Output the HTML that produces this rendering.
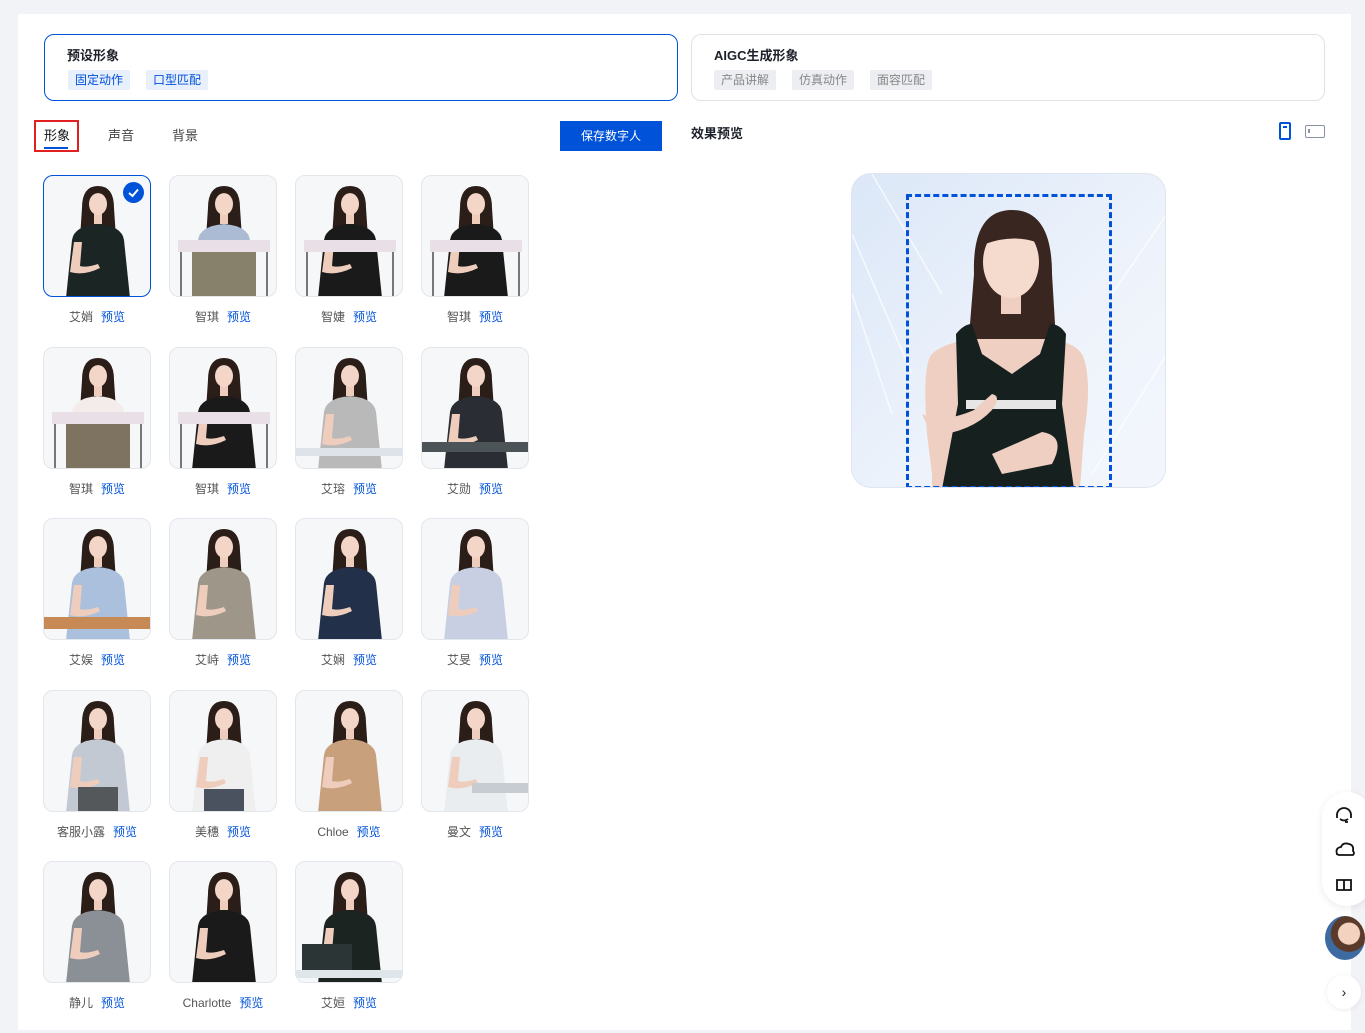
<!DOCTYPE html>
<html><head><meta charset="utf-8">
<style>
*{box-sizing:border-box;margin:0;padding:0}
body{width:1365px;height:1033px;background:#f2f3f7;font-family:"Liberation Sans","Noto Sans CJK SC",sans-serif;position:relative;overflow:hidden;color:#1d2129}
.panel{position:absolute;left:18px;top:14px;width:1333px;height:1016px;background:#fff}
.box{position:absolute;top:34px;height:67px;border-radius:10px;background:#fff}
.box h4{position:absolute;left:22px;top:10px;font-size:13px;font-weight:bold;color:#1d2129}
.tag{position:absolute;top:35px;height:20px;line-height:20px;font-size:12px;padding:0 7px;border-radius:2px}
.tb{background:#e8effd;color:#0052d9}
.tg{background:#eceef2;color:#888}
.tab{position:absolute;top:125px;font-size:13px;color:#444}
.card{position:absolute;width:108px;height:122px;border:1px solid #e3e6eb;border-radius:10px;background:#f5f7f9;overflow:hidden}
.card svg{position:absolute;left:0;top:0}
.sel{border:1.5px solid #0052d9}
.lbl{position:absolute;width:108px;text-align:center;font-size:12px;color:#555}
.lbl b{font-weight:normal;color:#0052d9;margin-left:8px}
</style></head><body>
<svg width="0" height="0" style="position:absolute">
<defs>
<symbol id="fig" viewBox="0 0 108 122">
<path d="M38 32 Q38 10 54 10 Q70 10 70 32 L72 62 L36 62Z" fill="#2b1d18"/>
<path d="M28 64 Q30 50 54 48 Q78 50 80 64 L86 122 L22 122Z" fill="currentColor"/>
<rect x="50" y="36" width="8" height="12" fill="#efcdbd"/>
<ellipse cx="54" cy="28" rx="9" ry="11" fill="#f3d6c7"/>
<path d="M44 22 Q54 12 64 22 L64 18 Q54 8 44 18Z" fill="#2b1d18"/>
<path d="M30 66 L26 96 Q40 100 56 92 L54 88 Q42 92 36 90 L38 66Z" fill="#efcdbd"/>
</symbol>
<symbol id="desk" viewBox="0 0 108 122">
<rect x="8" y="64" width="92" height="12" fill="#e8e0e6"/>
<rect x="10" y="76" width="2" height="46" fill="#777"/><rect x="96" y="76" width="2" height="46" fill="#777"/>
</symbol>
</defs></svg>

<div class="panel"></div>

<div class="box" style="left:44px;width:634px;border:1px solid #0052d9">
<h4>预设形象</h4>
<span class="tag tb" style="left:23px">固定动作</span>
<span class="tag tb" style="left:101px">口型匹配</span>
</div>
<div class="box" style="left:691px;width:634px;border:1px solid #e0e2e6">
<h4>AIGC生成形象</h4>
<span class="tag tg" style="left:22px">产品讲解</span>
<span class="tag tg" style="left:100px">仿真动作</span>
<span class="tag tg" style="left:178px">面容匹配</span>
</div>

<div style="position:absolute;left:34px;top:120px;width:45px;height:32px;border:2px solid #e02020"></div>
<div class="tab" style="left:44px;color:#111">形象</div>
<div style="position:absolute;left:44px;top:147px;width:24px;height:2px;background:#0052d9"></div>
<div class="tab" style="left:108px">声音</div>
<div class="tab" style="left:172px">背景</div>
<div style="position:absolute;left:560px;top:121px;width:102px;height:30px;background:#0052d9;color:#fff;font-size:12px;line-height:30px;text-align:center">保存数字人</div>

<div style="position:absolute;left:691px;top:123px;font-size:13px;font-weight:bold">效果预览</div>
<div style="position:absolute;left:1279px;top:122px;width:12px;height:18px;border:2px solid #0052d9;border-radius:2px"><div style="position:absolute;left:2px;top:2px;width:4px;height:1.5px;background:#0052d9"></div></div>
<div style="position:absolute;left:1305px;top:125px;width:20px;height:13px;border:1.5px solid #8a93a6;border-radius:2px"><div style="position:absolute;left:2px;top:3px;width:1.5px;height:4px;background:#8a93a6"></div></div>

<div style="position:absolute;left:851px;top:173px;width:315px;height:315px;border-radius:20px;overflow:hidden;background:linear-gradient(135deg,#dbe7f8,#eef3fb 60%,#f3f6fc);border:1px solid #dfe6f1">
<svg width="315" height="315" viewBox="0 0 315 315" style="position:absolute;left:0;top:0">
<g stroke="#fff" stroke-width="1.5" opacity=".7" fill="none"><path d="M0 60 L60 200 M0 120 L40 240 M260 120 L315 40 M240 300 L315 180 M20 0 L90 120"/></g>
<path d="M122 100 Q120 36 160 36 Q200 36 200 100 L206 200 L114 200Z" fill="#3a2620"/>
<path d="M80 300 L75 260 Q70 190 80 180 Q90 170 118 165 L200 165 Q228 170 232 185 Q240 210 232 260 L228 315 L80 315Z" fill="#efcfc1"/>
<path d="M104 160 Q112 150 120 150 L130 180 L160 200 L188 180 L198 150 Q208 150 214 160 L210 230 L222 315 L90 315 L106 230Z" fill="#16211f"/>
<rect x="114" y="226" width="90" height="9" fill="#e6e6e6"/>
<path d="M70 240 Q90 250 122 236 L140 220 Q150 222 140 236 Q120 258 80 262Z" fill="#efcfc1"/>
<path d="M140 280 L190 258 Q215 262 200 290 L150 300Z" fill="#efcfc1"/>
<rect x="149" y="100" width="20" height="40" fill="#efcfc1"/>
<ellipse cx="159" cy="88" rx="28" ry="36" fill="#f5dbcd"/>
<path d="M129 84 Q132 48 160 47 Q188 48 190 84 L184 68 Q160 60 133 70Z" fill="#3a2620"/>
</svg>
<div style="position:absolute;left:54px;top:20px;width:206px;height:295px;border:3px dashed #0052d9"></div>
</div>

<div class="card sel" style="left:43px;top:175px;color:#1b2624"><svg width="108" height="122"><use href="#fig"/></svg>
<div style="position:absolute;right:6px;top:6px;width:21px;height:21px;border-radius:50%;background:#0052d9"><svg width="21" height="21"><path d="M6 11 L9.5 14 L15 7.5" stroke="#fff" stroke-width="2" fill="none"/></svg></div></div>
<div class="lbl" style="left:43px;top:308px">艾娋<b>预览</b></div>

<div class="card" style="left:169px;top:175px;color:#aabbd3"><svg width="108" height="122"><use href="#fig"/><rect x="22" y="76" width="64" height="46" fill="#87806a"/><use href="#desk"/></svg></div>
<div class="lbl" style="left:169px;top:308px">智琪<b>预览</b></div>
<div class="card" style="left:295px;top:175px;color:#1a1a1a"><svg width="108" height="122"><use href="#fig"/><use href="#desk"/></svg></div>
<div class="lbl" style="left:295px;top:308px">智婕<b>预览</b></div>
<div class="card" style="left:421px;top:175px;color:#1a1a1a"><svg width="108" height="122"><use href="#fig"/><use href="#desk"/></svg></div>
<div class="lbl" style="left:421px;top:308px">智琪<b>预览</b></div>

<div class="card" style="left:43px;top:347px;color:#f3ecea"><svg width="108" height="122"><use href="#fig"/><rect x="22" y="76" width="64" height="46" fill="#7d7360"/><use href="#desk"/></svg></div>
<div class="lbl" style="left:43px;top:480px">智琪<b>预览</b></div>
<div class="card" style="left:169px;top:347px;color:#1a1a1a"><svg width="108" height="122"><use href="#fig"/><use href="#desk"/></svg></div>
<div class="lbl" style="left:169px;top:480px">智琪<b>预览</b></div>
<div class="card" style="left:295px;top:347px;color:#b9b9b9"><svg width="108" height="122"><use href="#fig"/><rect x="0" y="100" width="108" height="8" fill="#dde3e8"/></svg></div>
<div class="lbl" style="left:295px;top:480px">艾瑢<b>预览</b></div>
<div class="card" style="left:421px;top:347px;color:#2a2d33"><svg width="108" height="122"><use href="#fig"/><rect x="0" y="94" width="108" height="10" fill="#4d5457"/></svg></div>
<div class="lbl" style="left:421px;top:480px">艾勋<b>预览</b></div>

<div class="card" style="left:43px;top:518px;color:#aac0dc"><svg width="108" height="122"><use href="#fig"/><rect x="0" y="98" width="108" height="12" fill="#c88a55"/></svg></div>
<div class="lbl" style="left:43px;top:651px">艾娱<b>预览</b></div>
<div class="card" style="left:169px;top:518px;color:#9e9688"><svg width="108" height="122"><use href="#fig"/></svg></div>
<div class="lbl" style="left:169px;top:651px">艾峙<b>预览</b></div>
<div class="card" style="left:295px;top:518px;color:#22304a"><svg width="108" height="122"><use href="#fig"/></svg></div>
<div class="lbl" style="left:295px;top:651px">艾娴<b>预览</b></div>
<div class="card" style="left:421px;top:518px;color:#c8cfe2"><svg width="108" height="122"><use href="#fig"/></svg></div>
<div class="lbl" style="left:421px;top:651px">艾旻<b>预览</b></div>

<div class="card" style="left:43px;top:690px;color:#c3c9d3"><svg width="108" height="122"><use href="#fig"/><rect x="34" y="96" width="40" height="26" fill="#55585a"/></svg></div>
<div class="lbl" style="left:43px;top:823px">客服小露<b>预览</b></div>
<div class="card" style="left:169px;top:690px;color:#efefef"><svg width="108" height="122"><use href="#fig"/><rect x="34" y="98" width="40" height="24" fill="#4a5260"/></svg></div>
<div class="lbl" style="left:169px;top:823px">美穗<b>预览</b></div>
<div class="card" style="left:295px;top:690px;color:#c9a07c"><svg width="108" height="122"><use href="#fig"/></svg></div>
<div class="lbl" style="left:295px;top:823px">Chloe<b>预览</b></div>
<div class="card" style="left:421px;top:690px;color:#e9edf0"><svg width="108" height="122"><use href="#fig"/><rect x="50" y="92" width="58" height="10" fill="#c6ccd2"/></svg></div>
<div class="lbl" style="left:421px;top:823px">曼文<b>预览</b></div>

<div class="card" style="left:43px;top:861px;color:#8b8f96"><svg width="108" height="122"><use href="#fig"/></svg></div>
<div class="lbl" style="left:43px;top:994px">静儿<b>预览</b></div>
<div class="card" style="left:169px;top:861px;color:#1a1a1a"><svg width="108" height="122"><use href="#fig"/></svg></div>
<div class="lbl" style="left:169px;top:994px">Charlotte<b>预览</b></div>
<div class="card" style="left:295px;top:861px;color:#1c2422"><svg width="108" height="122"><use href="#fig"/><rect x="0" y="108" width="108" height="8" fill="#dfe6ea"/><rect x="6" y="82" width="50" height="26" fill="#2b3535"/></svg></div>
<div class="lbl" style="left:295px;top:994px">艾姮<b>预览</b></div>

<div style="position:absolute;left:1322px;top:792px;width:50px;height:114px;background:#fff;border-radius:25px;box-shadow:0 2px 8px rgba(0,0,0,.08)">
<svg width="50" height="114">
<g stroke="#111" stroke-width="1.8" fill="none">
<path d="M15 23 A7 7 0 0 1 29 23 M15 22 v4 M29 22 v4 M18 27 q4 3 8 0 M26 30 h-3"/>
<path d="M15 62 q-2 -6 4 -7 q2 -5 8 -3 q5 1 4 7 q2 2 0 4 h-14 q-3 -1 -2 -1z"/>
<path d="M15 88 h7 v10 h-7z M22 88 h7 v10 h-7z"/>
</g></svg></div>
<div style="position:absolute;left:1325px;top:916px;width:40px;height:44px;border-radius:50%;background:radial-gradient(circle at 60% 40%,#f3d2bf 30%,#5a3a2a 32%,#5a3a2a 50%,#3d6aa0 52%);"></div>
<div style="position:absolute;left:1327px;top:975px;width:34px;height:34px;border-radius:50%;background:#fff;box-shadow:0 1px 6px rgba(0,0,0,.08);text-align:center;line-height:34px;font-size:14px;color:#222">›</div>
</body></html>
